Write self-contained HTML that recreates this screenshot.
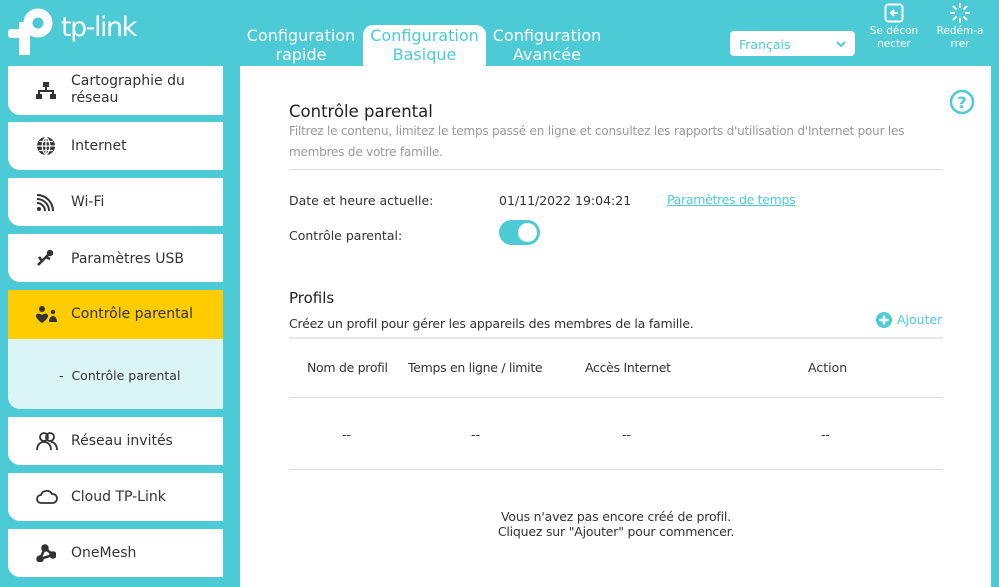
<!DOCTYPE html>
<html><head><meta charset="utf-8"><style>
*{margin:0;padding:0;box-sizing:border-box}
body{width:999px;height:587px;background:#4ccbd6;font-family:"DejaVu Sans","Liberation Sans",sans-serif;position:relative;overflow:hidden;color:#333}
.a{position:absolute}
.nav{position:absolute;left:8px;width:215px;background:#fff;border-radius:0 0 0 12px;font-size:14px;color:#333}
.nav span{position:absolute;left:63px}
.nav svg{position:absolute;left:28px}
.tab{position:absolute;top:26px;text-align:center;color:#fff;font-size:16px;line-height:19px}
.main{position:absolute;left:240px;top:66px;width:751px;height:521px;background:#fff}
.t{font-size:12.5px;color:#333;position:absolute}
.hr{position:absolute;left:49px;width:654px;height:1px;background:#ddd}
</style></head><body>
<!-- logo -->
<svg class="a" style="left:8px;top:8px" width="52" height="48" viewBox="0 0 52 48"><circle cx="30" cy="15" r="10" stroke="#fff" stroke-width="9" fill="none"/><rect x="11" y="14" width="11" height="33" fill="#fff"/><rect x="0" y="21" width="22" height="9" rx="3" fill="#fff"/></svg>
<div class="a" style="left:61px;top:12px;color:#fff;font-size:27px;font-family:'DejaVu Sans',sans-serif;letter-spacing:-1.5px">tp-link</div>
<div class="tab" style="left:244px;width:114px">Configuration<br>rapide</div>
<div class="a" style="left:363px;top:25px;width:123px;height:45px;background:#fff;border-radius:10px 10px 0 0"></div>
<div class="tab" style="left:363px;width:123px;color:#4ccbd6">Configuration<br>Basique</div>
<div class="tab" style="left:490px;width:114px">Configuration<br>Avancée</div>
<div class="a" style="left:730px;top:31px;width:125px;height:25px;background:#fff;border-radius:4px;font-size:12.5px;color:#4ccbd6;padding:6px 0 0 9px">Français<svg class="a" style="left:106px;top:10px" width="10" height="6"><path d="M1 1l4 4 4-4" stroke="#4ccbd6" stroke-width="2" fill="none"/></svg></div>
<svg class="a" style="left:884px;top:3px" width="20" height="20"><rect x="1.5" y="1.5" width="17" height="17" rx="3" stroke="#fff" stroke-width="2" fill="none"/><path d="M14 10H7M10 7l-3 3 3 3" stroke="#fff" stroke-width="2" fill="none"/></svg>
<div class="a" style="left:866px;top:25px;width:56px;text-align:center;color:#fff;font-size:10.5px;line-height:13px">Se décon<br>necter</div>
<svg class="a" style="left:949px;top:2px" width="22" height="22" stroke="#fff" stroke-width="2"><path d="M11 1v5M11 16v5M1 11h5M16 11h5M4 4l3.5 3.5M14.5 14.5L18 18M18 4l-3.5 3.5M7.5 14.5L4 18"/></svg>
<div class="a" style="left:932px;top:25px;width:56px;text-align:center;color:#fff;font-size:10.5px;line-height:13px">Redém-a<br>rrer</div>
<!-- sidebar -->
<div class="nav" style="top:66px;height:49px"><svg style="top:16px" width="20" height="18" fill="#333"><rect x="7" y="0" width="6" height="5"/><rect x="0" y="12" width="6" height="5"/><rect x="14" y="12" width="6" height="5"/><path d="M10 5v4M3 12V9h14v3" stroke="#333" stroke-width="2" fill="none"/></svg><span style="top:7px;line-height:17px">Cartographie du<br>réseau</span></div>
<div class="nav" style="top:122px;height:48px"><svg style="top:14px" width="20" height="20"><circle cx="10" cy="10" r="9" fill="#333"/><path d="M1 10h18M10 1v18M3 5.5h14M3 14.5h14M10 1c-5 4-5 14 0 18M10 1c5 4 5 14 0 18" stroke="#fff" stroke-width="1.3" fill="none"/></svg><span style="top:16px">Internet</span></div>
<div class="nav" style="top:178px;height:48px"><svg style="top:16px" width="18" height="18" fill="none" stroke="#333" stroke-width="2"><circle cx="3" cy="15" r="2" fill="#333" stroke="none"/><path d="M1 9a8 8 0 0 1 8 8M1 5a12 12 0 0 1 12 12M1 1a16 16 0 0 1 16 16"/></svg><span style="top:16px">Wi-Fi</span></div>
<div class="nav" style="top:234px;height:48px"><svg style="top:15px" width="18" height="18" stroke="#333" stroke-width="2.5" fill="none"><path d="M2 16L14 4M6 12l-3-4M10 8l4 2"/><circle cx="14" cy="4" r="2" fill="#333"/></svg><span style="top:17px">Paramètres USB</span></div>
<div class="nav" style="top:290px;height:119px;background:#dbf5f7"></div>
<div class="nav" style="top:290px;height:49px;background:#ffcc00;border-radius:0"><svg style="top:16px" width="22" height="18" fill="#333"><circle cx="6" cy="3" r="3"/><path d="M0 10c0-3 3-3 6-1 3-2 6-2 6 1 0 3-6 7-6 7s-6-4-6-7z"/><circle cx="17" cy="6" r="2.2"/><path d="M13 16c0-4 2-6 4-6s4 2 4 6z"/></svg><span style="top:16px">Contrôle parental</span></div>
<div class="a" style="left:59px;top:368px;font-size:12.5px;color:#333">-&nbsp; Contrôle parental</div>
<div class="nav" style="top:417px;height:48px"><svg style="top:14px" width="22" height="20" fill="none" stroke="#333" stroke-width="1.8"><circle cx="8" cy="6" r="4"/><circle cx="14" cy="6" r="4"/><path d="M1 19c0-5 3-8 7-8s7 3 7 8M15 11c3 0 6 3 6 8"/></svg><span style="top:16px">Réseau invités</span></div>
<div class="nav" style="top:473px;height:48px"><svg style="top:15px" width="22" height="16" fill="none" stroke="#333" stroke-width="1.8"><path d="M5 15a4 4 0 0 1 0-8 6 6 0 0 1 11-1 4.5 4.5 0 0 1 1 9z"/></svg><span style="top:16px">Cloud TP-Link</span></div>
<div class="nav" style="top:529px;height:48px"><svg style="top:15px" width="20" height="18" stroke="#333" stroke-width="2.5" fill="#333"><path d="M4 15L9 4 17 11z" fill="none"/><circle cx="4" cy="15" r="2.5"/><circle cx="9" cy="4" r="2.5"/><circle cx="17" cy="11" r="2.5"/></svg><span style="top:16px">OneMesh</span></div>
<!-- main -->
<div class="main">
<div class="a" style="left:49px;top:36px;font-size:16.5px;color:#222">Contrôle parental</div>
<div class="a" style="left:49px;top:55px;white-space:nowrap;font-size:12px;line-height:21px;color:#999;letter-spacing:-0.2px">Filtrez le contenu, limitez le temps passé en ligne et consultez les rapports d'utilisation d'Internet pour les<br>membres de votre famille.</div>
<svg class="a" style="left:709px;top:23px" width="26" height="26"><circle cx="13" cy="13" r="11" stroke="#4ccbd6" stroke-width="2.5" fill="none"/><text x="13" y="19" text-anchor="middle" font-size="16" font-weight="bold" fill="#4ccbd6" font-family="DejaVu Sans">?</text></svg>
<div class="hr" style="top:103px"></div>
<div class="t" style="left:49px;top:127px">Date et heure actuelle:</div>
<div class="t" style="left:259px;top:127px">01/11/2022 19:04:21</div>
<div class="t" style="left:427px;top:126px;color:#4ccbd6;text-decoration:underline;letter-spacing:-0.3px">Paramètres de temps</div>
<div class="t" style="left:49px;top:162px">Contrôle parental:</div>
<div class="a" style="left:259px;top:154px;width:41px;height:25px;border-radius:13px;background:#4ccbd6"><div class="a" style="left:19px;top:3px;width:19px;height:19px;border-radius:50%;background:#fff"></div></div>
<div class="a" style="left:49px;top:223px;font-size:15px;color:#222">Profils</div>
<div class="t" style="left:49px;top:250px;letter-spacing:-0.2px">Créez un profil pour gérer les appareils des membres de la famille.</div>
<svg class="a" style="left:636px;top:246px" width="16" height="16"><circle cx="8" cy="8" r="8" fill="#4ccbd6"/><path d="M8 3.5v9M3.5 8h9" stroke="#fff" stroke-width="2.5"/></svg>
<div class="t" style="left:657px;top:246px;color:#4ccbd6">Ajouter</div>
<div class="hr" style="top:271px;height:2px;background:#e6e6e6"></div>
<div class="t" style="left:67px;top:294px;letter-spacing:-0.3px">Nom de profil</div>
<div class="t" style="left:168px;top:294px;letter-spacing:-0.3px">Temps en ligne / limite</div>
<div class="t" style="left:345px;top:294px;letter-spacing:-0.3px">Accès Internet</div>
<div class="t" style="left:568px;top:294px">Action</div>
<div class="hr" style="top:331px"></div>
<div class="t" style="left:102px;top:361px">--</div>
<div class="t" style="left:231px;top:361px">--</div>
<div class="t" style="left:382px;top:361px">--</div>
<div class="t" style="left:581px;top:361px">--</div>
<div class="hr" style="top:403px"></div>
<div class="t" style="left:49px;width:654px;top:443px;text-align:center;line-height:15px;letter-spacing:-0.2px">Vous n'avez pas encore créé de profil.<br>Cliquez sur "Ajouter" pour commencer.</div>
</div>
</body></html>
